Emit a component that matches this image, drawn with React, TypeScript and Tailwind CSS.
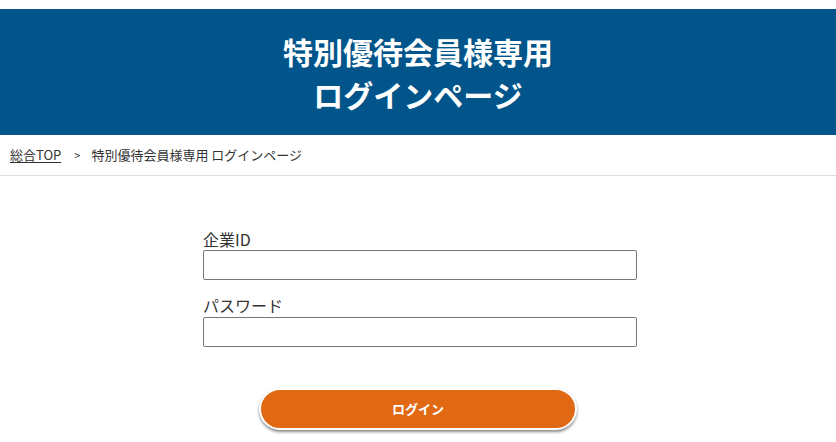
import React from 'react';

const jp = { fontFamily: '"Noto Sans CJK JP", "Noto Sans", sans-serif' };

const App = () => {
  return (
    <div className="min-h-screen bg-white text-[#333]" style={jp}>
      {/* Title banner */}
      <header className="mt-[9px] h-[126px] bg-[#02558a] flex flex-col items-center justify-center">
        <h1 className="text-white font-bold text-[30px] leading-[43px] text-center pt-[1px]">
          特別優待会員様専用
          <br />
          ログインページ
        </h1>
      </header>

      {/* Breadcrumb */}
      <nav className="h-[41px] border-b border-[#dddddd] flex items-center px-[10px] text-[13px] text-[#333]">
        <a href="#" className="underline underline-offset-2">総合TOP</a>
        <span className="ml-[13px] mr-[11px] text-[11px]">&gt;</span>
        <span>特別優待会員様専用 ログインページ</span>
      </nav>

      {/* Login form */}
      <main className="flex flex-col items-center pt-[53px]">
        <div className="w-[434px] ml-[4px]">
          <label className="block text-[16px] leading-[20px] mb-[1px]">企業ID</label>
          <input type="text" className="block w-full h-[30px] border border-[#777] rounded-[2px] px-2" />
          <label className="block text-[16px] leading-[20px] mt-[15px] mb-[2px]">パスワード</label>
          <input type="password" className="block w-full h-[30px] border border-[#777] rounded-[2px] px-2" />
        </div>
        <button className="mt-[41px] w-[318px] h-[42px] rounded-full bg-[#e26914] text-white font-bold text-[13px] shadow-[0_2px_3px_rgba(0,0,0,0.45)] border-2 border-white">
          ログイン
        </button>
      </main>
    </div>
  );
};

export default App;
